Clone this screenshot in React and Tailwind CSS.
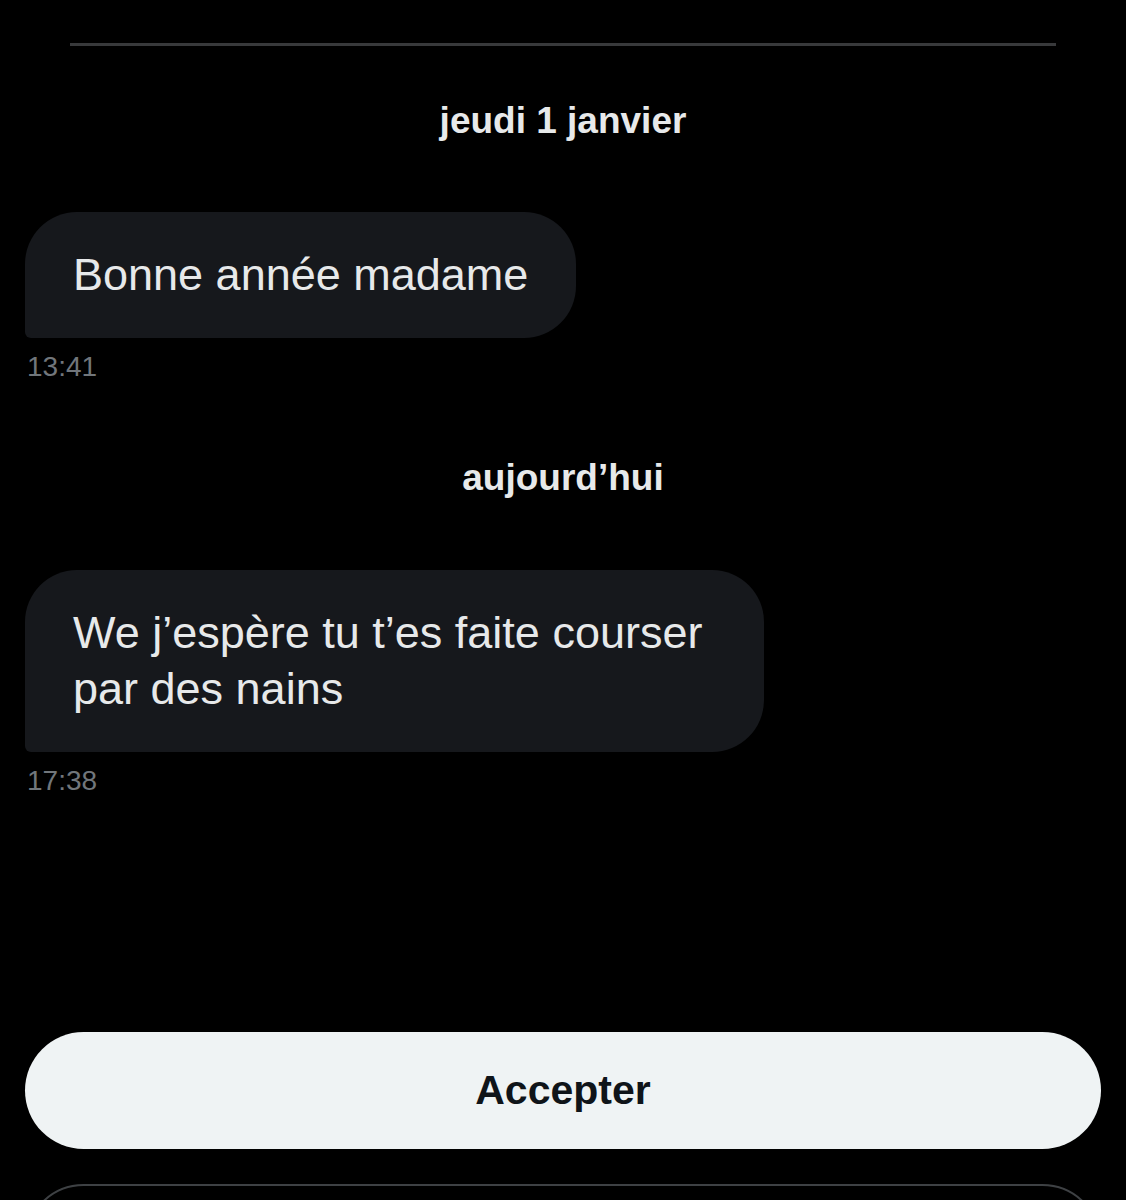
const font = { fontFamily: '"Liberation Sans", Arial, sans-serif' }

function DateLabel({ children, className = '' }) {
  return (
    <div className={`text-center text-[37px] leading-[44px] font-bold text-[#e7e9ea] ${className}`}>
      {children}
    </div>
  )
}

function Bubble({ text, time, className = '' }) {
  return (
    <div className={`flex flex-col items-start ${className}`}>
      <div className="w-fit max-w-[739px] rounded-[52px] rounded-bl-[6px] bg-[#16181c] pl-[48px] pr-[48px] py-[35px] text-[45px] leading-[56px] text-[#e7e9ea]">
        {text}
      </div>
      <div className="mt-[13px] pl-[2px] text-[28px] leading-[32px] text-[#71767b]">{time}</div>
    </div>
  )
}

export default function App() {
  return (
    <div className="h-[1200px] overflow-hidden bg-black px-[25px]" style={font}>
      <div className="pt-[43px] px-[45px]">
        <div className="h-[3px] bg-[#38393b]" />
      </div>

      <DateLabel className="mt-[53px]">jeudi 1 janvier</DateLabel>
      <Bubble className="mt-[69px]" text="Bonne année madame" time="13:41" />

      <DateLabel className="mt-[73px]">aujourd’hui</DateLabel>
      <Bubble className="mt-[70px]" text="We j’espère tu t’es faite courser par des nains" time="17:38" />

      <button className="mt-[235px] flex h-[117px] w-full items-center justify-center rounded-full bg-[#eff3f4] text-[41px] font-bold text-[#0f1419]">
        Accepter
      </button>
      <button className="mt-[35px] h-[117px] w-full rounded-full border-2 border-[#3e4144] bg-black" />
    </div>
  )
}
